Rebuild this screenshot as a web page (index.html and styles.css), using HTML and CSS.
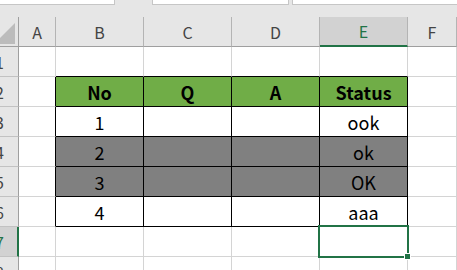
FILE: index.html
```html
<!DOCTYPE html>
<html>

<head>
    <link rel="stylesheet" href="styles.css">
</head>

<body>
    <div class="topbar">
        <div class="box box-name"></div>
        <div class="box box-formula"></div>
        <div class="box box-right"></div>
    </div>
    <div class="sheet">
        <div class="c h corner"><div class="select-all"></div></div>
        <div class="c h col">A</div>
        <div class="c h col">B</div>
        <div class="c h col">C</div>
        <div class="c h col">D</div>
        <div class="c h col active-col">E</div>
        <div class="c h col">F</div>

        <div class="c h row"><span>1</span></div>
        <div class="c"></div>
        <div class="c above"></div>
        <div class="c above"></div>
        <div class="c above"></div>
        <div class="c above"></div>
        <div class="c"></div>

        <div class="c h row"><span>2</span></div>
        <div class="c before"></div>
        <div class="c t green">No</div>
        <div class="c t green">Q</div>
        <div class="c t green">A</div>
        <div class="c t green">Status</div>
        <div class="c"></div>

        <div class="c h row"><span>3</span></div>
        <div class="c before"></div>
        <div class="c t">1</div>
        <div class="c t"></div>
        <div class="c t"></div>
        <div class="c t">ook</div>
        <div class="c"></div>

        <div class="c h row"><span>4</span></div>
        <div class="c before"></div>
        <div class="c t gray">2</div>
        <div class="c t gray"></div>
        <div class="c t gray"></div>
        <div class="c t gray">ok</div>
        <div class="c"></div>

        <div class="c h row"><span>5</span></div>
        <div class="c before"></div>
        <div class="c t gray">3</div>
        <div class="c t gray"></div>
        <div class="c t gray"></div>
        <div class="c t gray">OK</div>
        <div class="c"></div>

        <div class="c h row"><span>6</span></div>
        <div class="c before"></div>
        <div class="c t">4</div>
        <div class="c t"></div>
        <div class="c t"></div>
        <div class="c t">aaa</div>
        <div class="c"></div>

        <div class="c h row active-row"><span>7</span></div>
        <div class="c"></div>
        <div class="c"></div>
        <div class="c"></div>
        <div class="c"></div>
        <div class="c selected"><div class="sel-box"></div><div class="sel-handle"></div></div>
        <div class="c"></div>

        <div class="c h row"><span>8</span></div>
        <div class="c"></div>
        <div class="c"></div>
        <div class="c"></div>
        <div class="c"></div>
        <div class="c"></div>
        <div class="c"></div>
    </div>
</body>

</html>
```

FILE: styles.css
```css
* {
    box-sizing: border-box;
}

html,
body {
    width: 100%;
    height: 100%;
    margin: 0;
    padding: 0;
    overflow: hidden;
    background: #ffffff;
    font-family: "Noto Sans CJK JP", "Noto Sans", sans-serif;
}

.topbar {
    height: 17px;
    background: #e6e6e6;
    display: flex;
    align-items: flex-start;
}

.box {
    height: 5px;
    background: #ffffff;
    border-bottom: 1px solid #c6c6c6;
}

.box-name {
    width: 115px;
    border-right: 1px solid #c6c6c6;
}

.box-formula {
    width: 137px;
    margin-left: 37px;
    border-left: 1px solid #c6c6c6;
    border-right: 1px solid #c6c6c6;
}

.box-right {
    flex: 1;
    margin-left: 3px;
    border-left: 1px solid #c6c6c6;
}

.sheet {
    display: grid;
    grid-template-columns: 19px 37px 88px 88px 88px 88px 1fr;
    grid-auto-rows: 30px;
}

.c {
    border-right: 1px solid #d4d4d4;
    border-bottom: 1px solid #d4d4d4;
    display: flex;
    align-items: center;
    justify-content: center;
    font-size: 18px;
    color: #000000;
}

/* headers */
.h {
    background: #e6e6e6;
    color: #444444;
    font-size: 16px;
    overflow: hidden;
}

.col {
    border-right-color: #b4b4b4;
    border-bottom-color: #9f9f9f;
}

.row {
    border-right-color: #9f9f9f;
    border-bottom-color: #c2c2c2;
    justify-content: flex-end;
    padding-right: 14px;
}

.corner {
    border-right-color: #9f9f9f;
    border-bottom-color: #9f9f9f;
    align-items: flex-end;
    justify-content: flex-end;
    padding: 0 3px 2px 0;
}

.select-all {
    flex: none;
    width: 21px;
    height: 21px;
    background: #bcbcbc;
    clip-path: polygon(100% 0, 100% 100%, 0 100%);
}

.active-col {
    background: #d2d2d2;
    color: #217346;
    border-bottom: 2px solid #217346;
}

.active-row {
    background: #d2d2d2;
    color: #217346;
    border-right: 2px solid #217346;
    padding-right: 13px;
}

/* table */
.above {
    border-bottom-color: #000000;
}

.before {
    border-right-color: #000000;
}

.t {
    border-right-color: #000000;
    border-bottom-color: #000000;
}

.green {
    background: #70ad47;
    font-weight: bold;
}

.gray {
    background: #808080;
}

/* selection */
.selected {
    position: relative;
}

.sel-box {
    position: absolute;
    left: -2px;
    top: -2px;
    width: 91px;
    height: 33px;
    border: 2px solid #217346;
}

.sel-handle {
    position: absolute;
    left: 84px;
    top: 26px;
    width: 7px;
    height: 7px;
    background: #217346;
    border: 1px solid #ffffff;
}
```
